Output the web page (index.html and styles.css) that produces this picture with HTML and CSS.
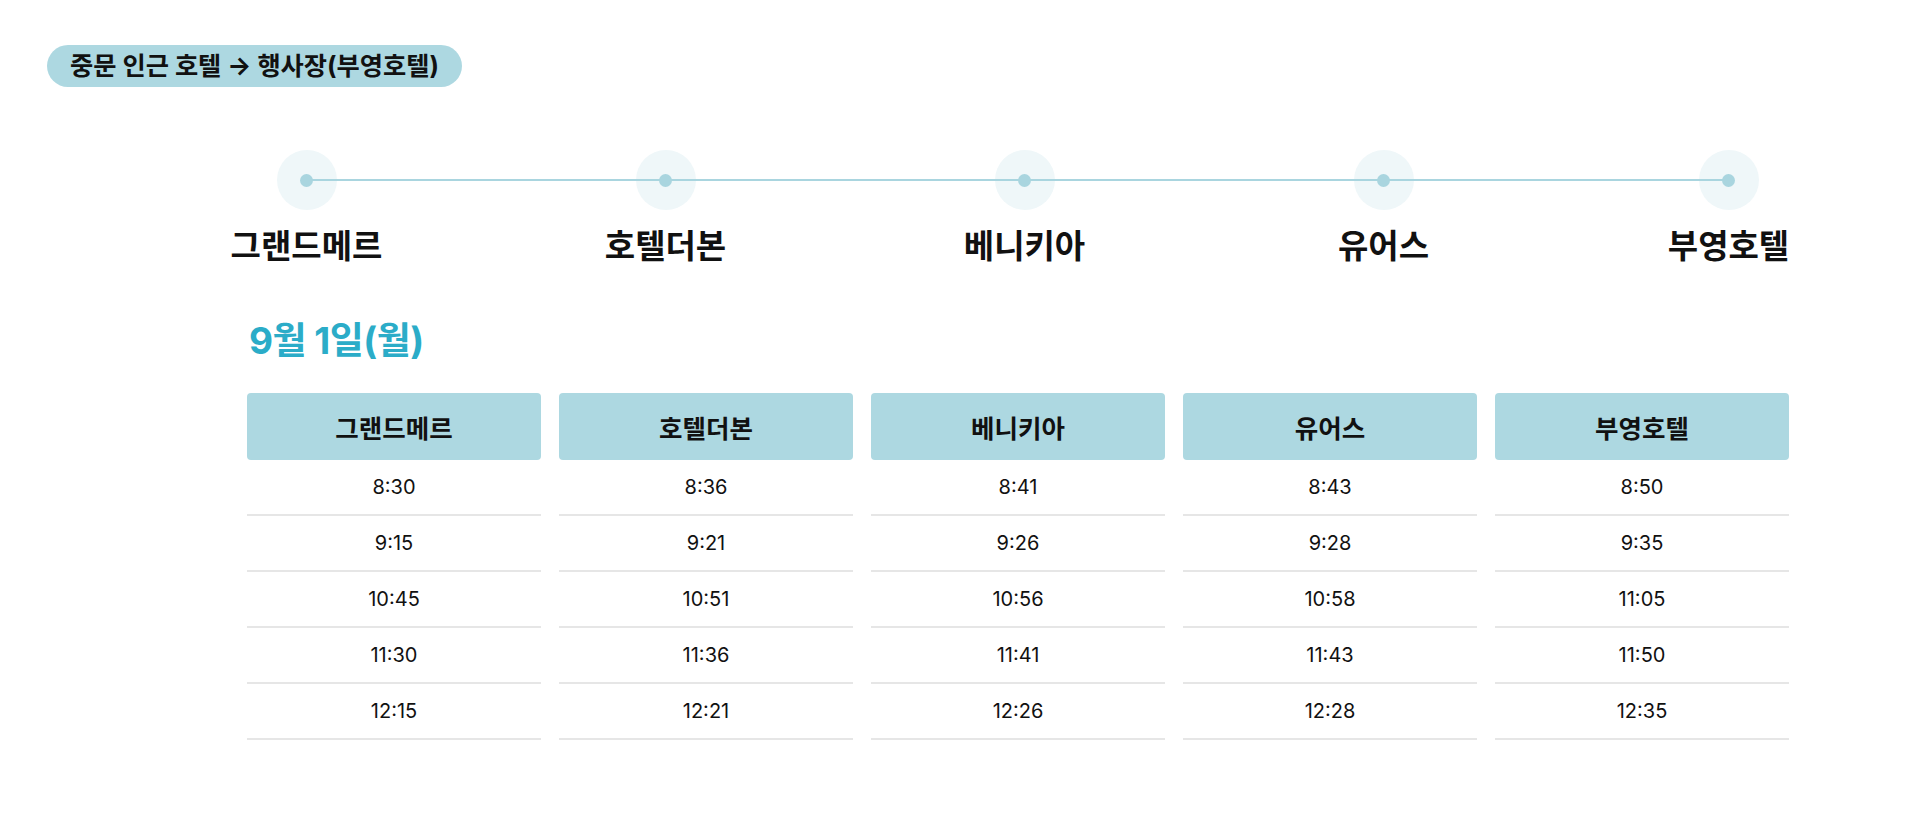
FILE: index.html
```html
<!DOCTYPE html>
<html lang="ko">
<head>
<meta charset="utf-8">
<title>셔틀 시간표</title>
<link rel="stylesheet" href="styles.css">
</head>
<body>
<div class="page">
  <div class="badge">중문 인근 호텔 → 행사장(부영호텔)</div>

  <div class="route">
    <div class="stop"><span class="halo"><span class="dot"></span></span><span class="stop-name">그랜드메르</span></div>
    <div class="stop"><span class="halo"><span class="dot"></span></span><span class="stop-name">호텔더본</span></div>
    <div class="stop"><span class="halo"><span class="dot"></span></span><span class="stop-name">베니키아</span></div>
    <div class="stop"><span class="halo"><span class="dot"></span></span><span class="stop-name">유어스</span></div>
    <div class="stop"><span class="halo"><span class="dot"></span></span><span class="stop-name">부영호텔</span></div>
  </div>

  <div class="schedule">
    <h2 class="date">9월 1일(월)</h2>
    <div class="table">
      <div class="col">
        <div class="head">그랜드메르</div>
        <div class="cell">8:30</div><div class="cell">9:15</div><div class="cell">10:45</div><div class="cell">11:30</div><div class="cell">12:15</div>
      </div>
      <div class="col">
        <div class="head">호텔더본</div>
        <div class="cell">8:36</div><div class="cell">9:21</div><div class="cell">10:51</div><div class="cell">11:36</div><div class="cell">12:21</div>
      </div>
      <div class="col">
        <div class="head">베니키아</div>
        <div class="cell">8:41</div><div class="cell">9:26</div><div class="cell">10:56</div><div class="cell">11:41</div><div class="cell">12:26</div>
      </div>
      <div class="col">
        <div class="head">유어스</div>
        <div class="cell">8:43</div><div class="cell">9:28</div><div class="cell">10:58</div><div class="cell">11:43</div><div class="cell">12:28</div>
      </div>
      <div class="col">
        <div class="head">부영호텔</div>
        <div class="cell">8:50</div><div class="cell">9:35</div><div class="cell">11:05</div><div class="cell">11:50</div><div class="cell">12:35</div>
      </div>
    </div>
  </div>
</div>
</body>
</html>
```

FILE: styles.css
```css
* { box-sizing: border-box; }

html, body {
  margin: 0;
  padding: 0;
  background: #ffffff;
}

body {
  font-family: "Inter", "Noto Sans CJK KR", sans-serif;
  color: #111111;
}

.page {
  padding: 45px 0 0 47px;
}

.badge {
  display: inline-block;
  height: 42px;
  line-height: 42px;
  padding: 0 23px 0 23px;
  border-radius: 21px;
  background: #add8e1;
  font-size: 25.25px;
  font-weight: 700;
  letter-spacing: 0;
  color: #111111;
}

.route {
  position: relative;
  display: flex;
  width: 1767px;
  margin: 63px 0 0 80px;
}

.route::before {
  content: "";
  position: absolute;
  left: 179.5px;
  right: 165.5px;
  top: 29px;
  height: 2px;
  background: #a9d5df;
}

.stop {
  flex: 0 0 359px;
  display: flex;
  flex-direction: column;
  align-items: center;
}

.stop:last-child {
  flex-basis: 331px;
}

.halo {
  width: 60px;
  height: 60px;
  border-radius: 50%;
  background: #eff7f9;
  display: flex;
  align-items: center;
  justify-content: center;
}

.dot {
  position: relative;
  z-index: 2;
  width: 13px;
  height: 13px;
  border-radius: 50%;
  background: #a9d5df;
}

.stop-name {
  margin-top: 16px;
  font-size: 33px;
  line-height: 40px;
  font-weight: 700;
  letter-spacing: 0;
  white-space: nowrap;
}

.schedule {
  margin: 52px 0 0 200px;
  width: 1542px;
}

.date {
  margin: 0 0 29px 2px;
  font-size: 37px;
  line-height: 46px;
  font-weight: 700;
  letter-spacing: -0.5px;
  color: #2bacc8;
}

.table {
  display: grid;
  grid-template-columns: repeat(5, 1fr);
  column-gap: 18px;
}

.col {
  display: flex;
  flex-direction: column;
}

.head {
  height: 67px;
  display: flex;
  align-items: center;
  justify-content: center;
  background: #add8e1;
  border-radius: 4px;
  font-size: 25.5px;
  font-weight: 700;
  letter-spacing: 0;
}

.cell {
  height: 56px;
  display: flex;
  align-items: center;
  justify-content: center;
  border-bottom: 2px solid #e6e6e6;
  font-size: 20px;
  font-weight: 400;
  color: #111111;
}
```
